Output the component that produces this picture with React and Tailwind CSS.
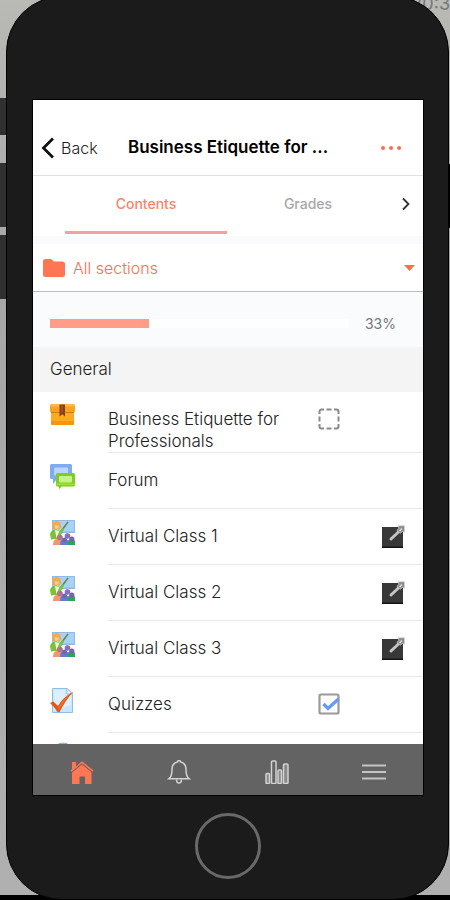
import React, { useState } from 'react';

const courseItems = [
  { id: 1, title: 'Business Etiquette for Professionals', icon: 'package', check: 'pending' },
  { id: 2, title: 'Forum', icon: 'forum' },
  { id: 3, title: 'Virtual Class 1', icon: 'class', link: '#class-1' },
  { id: 4, title: 'Virtual Class 2', icon: 'class', link: '#class-2' },
  { id: 5, title: 'Virtual Class 3', icon: 'class', link: '#class-3' },
  { id: 6, title: 'Quizzes', icon: 'quiz', check: 'done' },
  { id: 7, title: '', icon: 'globe' },
];

const PackageIcon = () => (
  <svg viewBox="0 0 25 25" className="size-[25px]" aria-hidden="true">
    <rect x="1" y="7" width="23" height="15" rx="1.5" fill="#fbab1c" />
    <path d="M1 18h23v2.5a1.5 1.5 0 0 1-1.5 1.5h-20A1.5 1.5 0 0 1 1 20.5z" fill="#f3970f" />
    <rect x="0" y="1" width="25" height="8.5" rx="1.5" fill="#f6a31e" />
    <path d="M1.5 1h22l1 2.5H.5z" fill="#fdb944" />
    <path d="M1 9h23v1H1z" fill="#d57a0c" />
    <path d="M9.5 1.5h5.500v12l-2.700-2.300-2.800 2.300z" fill="#8b3d12" />
    <path d="M11.500 2h1v8h-1z" fill="#b5652c" />
  </svg>
);

const ForumIcon = () => (
  <svg viewBox="0 0 25 25" className="size-[25px]" aria-hidden="true">
    <path d="M1.500 0h19A1.500 1.500 0 0 1 22 1.500v12a1.500 1.500 0 0 1-1.500 1.500H7l-4 5v-5H1.500A1.500 1.500 0 0 1 0 13.500v-12A1.500 1.500 0 0 1 1.500 0z" fill="#7fabf2" />
    <rect x="4" y="3.500" width="14" height="8" rx="1" fill="#bcd5fb" />
    <path d="M7.500 9h16a1.500 1.500 0 0 1 1.500 1.500v10.500a1.500 1.500 0 0 1-1.500 1.500H11.500L9.500 25l-1-2.500h-1A1.500 1.500 0 0 1 6 21V10.500A1.500 1.500 0 0 1 7.500 9z" fill="#7fce20" />
    <rect x="9" y="12" width="13" height="6.500" rx="1" fill="#c8f28a" />
    <path d="M6.500 19.500h18V21h-18z" fill="#9be833" />
  </svg>
);

const ClassIcon = () => (
  <svg viewBox="0 0 25 25" className="size-[25px]" aria-hidden="true">
    <rect x="2" y="0" width="23" height="13" fill="#8fb9ea" />
    <path d="M3 1h21v10.500H3z" fill="#a9d0f5" />
    <path d="M17.500 1.500l1.200.8-8 11-1.700-.8z" fill="#5a8a4a" />
    <path d="M0 14q1-4 5-4.500l5 1.500 2.500-3 1.700 1L11 15l-1 4H4l-3 .5z" fill="#7fc03a" />
    <path d="M5 10l1.500 8 3-7z" fill="#f3f7e6" />
    <circle cx="6.500" cy="5.500" r="4.500" fill="#ecae4c" />
    <path d="M4.500 5q2 1.300 4.500 0-.3 4-2.300 4T4.500 5z" fill="#f8cf8d" />
    <path d="M3 25q0-6.500 5-6.500t5 6.500z" fill="#f2937c" />
    <path d="M10 25q0-6 4.500-6t4.500 6z" fill="#5b7fd6" />
    <path d="M17 25q0-6 4.500-6 3.500 0 3.500 3v3z" fill="#2fa06a" />
    <circle cx="10" cy="17.500" r="2.800" fill="#b0709a" />
    <circle cx="14.500" cy="20" r="2.500" fill="#7863b3" />
    <circle cx="17.500" cy="16" r="2.800" fill="#8470c0" />
    <circle cx="21.800" cy="19" r="2.600" fill="#7a62a8" />
  </svg>
);

const QuizIcon = () => (
  <svg viewBox="0 0 25 25" className="size-[25px]" aria-hidden="true">
    <path d="M2.500.5H17l5.500 5.500v18.500h-20z" fill="#cbe5fb" stroke="#8fbfe8" />
    <path d="M4 2h11v5.500h6V17L4 23z" fill="#dceffd" />
    <path d="M17 .5V6h5.500z" fill="#fff" stroke="#8fbfe8" />
    <path d="M0 15l3.500-1.500L8 18Q13 9 23.500 3.500 16 11.500 9.500 24H7.500Q4 18.500 0 15z" fill="#e2581a" />
    <path d="M8 20q5-9 11-13Q13.500 14 9 22z" fill="#f0702c" />
  </svg>
);

const GlobeIcon = () => (
  <svg viewBox="0 0 25 25" className="size-[25px] overflow-visible" aria-hidden="true">
    <circle cx="13" cy="10" r="11" fill="#a5cdf2" stroke="#7db0e0" />
    <path d="M4 7q8-6 17 0l-5 8z" fill="#bfe0f8" />
  </svg>
);

const itemIcons = {
  package: PackageIcon,
  forum: ForumIcon,
  class: ClassIcon,
  quiz: QuizIcon,
  globe: GlobeIcon,
};

const OpenIcon = () => (
  <svg viewBox="0 0 24 24" className="size-6" aria-hidden="true">
    <rect x="1" y="2" width="21" height="21" fill="#383838" />
    <path d="M1 21.500h21V23H1z" fill="#151515" />
    <path d="M10 14l9-8.500" stroke="#c4c4c4" strokeWidth="3" strokeLinecap="round" />
    <path d="M17 .8h6.500v6.400l-2.300-.7-2.200 1.800-3-3 2-2.200z" fill="#8c8c8c" stroke="#d0d0d0" strokeWidth=".8" />
    <path d="M18.500 6l2.500-2.500" stroke="#ddd" strokeWidth="1.500" />
  </svg>
);

// 受講状況のチェックボックス
const StatusCheck = ({ item }) => {
  const [done, setDone] = useState(item.check === 'done');

  return (
    <label className="relative block size-[22px]">
      <input
        type="checkbox"
        checked={done}
        onChange={() => setDone(!done)}
        aria-label={item.title}
        className="block size-[22px] appearance-none"
      />
      <svg viewBox="0 0 22 22" className="pointer-events-none absolute inset-0 size-[22px]" aria-hidden="true">
        {done ? (
          <>
            <rect x="1.500" y="1.500" width="19" height="19" rx="1.500" fill="#fff" stroke="#999" strokeWidth="2.200" />
            <path d="M5.500 11l4.500 4.500L20.500 6" fill="none" stroke="#659bf3" strokeWidth="3.400" />
          </>
        ) : (
          <>
            <path
              d="M1.500 6V3.500a2 2 0 0 1 2-2H6M16 1.500h2.500a2 2 0 0 1 2 2V6M20.500 16v2.500a2 2 0 0 1-2 2H16M6 20.500H3.500a2 2 0 0 1-2-2V16"
              fill="none"
              stroke="#8a8a8a"
              strokeWidth="2"
            />
            <path d="M8.500 1.500h5M8.500 20.500h5M1.500 8.500v5M20.500 8.500v5" stroke="#8a8a8a" strokeWidth="2" />
          </>
        )}
      </svg>
    </label>
  );
};

const CourseRow = ({ item }) => {
  const Icon = itemIcons[item.icon];

  return (
    <li className="flex min-h-14 pl-[17px]">
      <div className="w-[58px] shrink-0 pt-[11px]">
        <Icon />
      </div>
      <div className="flex flex-1 items-start border-b border-[#e9e9e9] pt-4">
        <p className="flex-1 text-[17px] leading-[22px] font-light text-[#222]">{item.title}</p>
        <div className="flex w-8 shrink-0 justify-center">
          {item.check && <StatusCheck item={item} />}
        </div>
        <div className="flex w-[78px] shrink-0 justify-end pr-[18px]">
          {item.link && (
            <a href={item.link} aria-label={`Open ${item.title}`}>
              <OpenIcon />
            </a>
          )}
        </div>
      </div>
    </li>
  );
};

const BottomNav = () => (
  <nav className="grid h-[51px] shrink-0 grid-cols-4 bg-[#636363] pt-1">
    <a href="#home" aria-label="Home" className="flex items-center justify-center">
      <svg viewBox="0 0 24 24" className="size-6" fill="#ff7653" aria-hidden="true">
        <path d="M2 2h4v4.500L12 1.200l11.500 9.300-1 1.200L12 3.200 1.500 11.700.5 10.500 2 9.300z" />
        <path d="M12 4.400l9.500 7.800V24H15v-7.500H9.500V24H2V12.500z" />
      </svg>
    </a>
    <a href="#notifications" aria-label="Notifications" className="flex items-center justify-center">
      <svg viewBox="0 0 24 24" className="size-6" fill="none" stroke="#d2d2d2" strokeWidth="1.500" aria-hidden="true">
        <path d="M10.500 2a1.500 1.500 0 0 1 3 0C17.500 2.800 19 5.500 19 9.500c0 5 .8 7.500 3 9.200H2C4.200 17 5 14.500 5 9.500c0-4 1.500-6.700 5.500-7.500z" />
        <path d="M9.500 19.500a2.500 3.500 0 0 0 5 0" />
      </svg>
    </a>
    <a href="#stats" aria-label="Statistics" className="flex items-center justify-center">
      <svg viewBox="0 0 24 24" className="size-6" fill="#8a8a8a" stroke="#d2d2d2" strokeWidth="1.500" aria-hidden="true">
        <rect x="1" y="13.500" width="3.500" height="10" rx="1" />
        <rect x="6.500" y="1" width="4.500" height="22.500" rx="1" fill="none" />
        <rect x="13" y="10" width="3.500" height="13.500" rx="1" />
        <rect x="18.500" y="4" width="4.500" height="19.500" rx="1" />
      </svg>
    </a>
    <a href="#menu" aria-label="Menu" className="flex items-center justify-center">
      <svg viewBox="0 0 24 24" className="size-6" stroke="#c4c4c4" strokeWidth="1.800" aria-hidden="true">
        <path d="M0 5.500h24M0 12h24M0 18.500h24" />
      </svg>
    </a>
  </nav>
);

const CourseScreen = () => {
  const [tab, setTab] = useState('contents');
  const progress = 33;

  return (
    <main className="flex min-h-0 flex-1 flex-col overflow-hidden bg-white">
      {/* ヘッダー */}
      <header className="grid h-[76px] shrink-0 grid-cols-[1fr_auto_1fr] items-center border-b border-[#e2e2e2] px-2 pt-5">
        <a href="#back" className="flex items-center gap-1.5 text-[16px] font-light text-[#222]">
          <svg viewBox="0 0 14 22" className="h-[22px] w-3.5" fill="none" stroke="#111" strokeWidth="2.800" aria-hidden="true">
            <path d="M12 1.500L2.500 11l9.500 9.500" />
          </svg>
          Back
        </a>
        <h1 className="text-[17px] font-semibold text-black">Business Etiquette for ...</h1>
        <button type="button" aria-label="More options" className="justify-self-end pr-3.5">
          <svg viewBox="0 0 20 4" className="h-1 w-5" fill="#f9704e" aria-hidden="true">
            <circle cx="2" cy="2" r="2" />
            <circle cx="10" cy="2" r="2" />
            <circle cx="18" cy="2" r="2" />
          </svg>
        </button>
      </header>

      {/* タブ */}
      <div className="flex shrink-0 pb-0.5 pl-8 text-[14px] font-medium">
        <button
          type="button"
          onClick={() => setTab('contents')}
          className={`h-[58px] flex-1 border-b-[3px] ${tab === 'contents' ? 'border-[#f8a196] text-[#f9856a]' : 'border-transparent text-[#a8a8a8]'}`}
        >
          Contents
        </button>
        <button
          type="button"
          onClick={() => setTab('grades')}
          className={`h-[58px] flex-1 border-b-[3px] ${tab === 'grades' ? 'border-[#f8a196] text-[#f9856a]' : 'border-transparent text-[#a8a8a8]'}`}
        >
          Grades
        </button>
        <button type="button" aria-label="Next tab" className="flex h-[55px] w-[34px] items-center justify-center">
          <svg viewBox="0 0 8 14" className="h-3.5 w-2" fill="none" stroke="#333" strokeWidth="1.800" aria-hidden="true">
            <path d="M1 1.500L6.500 7 1 12.500" />
          </svg>
        </button>
      </div>
      <div className="h-2 shrink-0 bg-[#fafbfc]" />

      {/* セクション選択 */}
      <label className="flex h-12 shrink-0 items-center border-b border-[#bdbdbd] pr-2 pl-2.5">
        <svg viewBox="0 0 22 18" className="h-[18px] w-[22px]" fill="#ff7653" aria-hidden="true">
          <path d="M2.500 0H8l3 2.500h8.500A2.500 2.500 0 0 1 22 5v10.500a2.500 2.500 0 0 1-2.500 2.500h-17A2.500 2.500 0 0 1 0 15.500v-13A2.500 2.500 0 0 1 2.500 0z" />
        </svg>
        <select aria-label="Section" className="min-w-0 flex-1 appearance-none bg-transparent pl-2 text-[16px] font-light text-[#f9704e]">
          <option>All sections</option>
        </select>
        <svg viewBox="0 0 11 6" className="h-1.5 w-[11px]" fill="#f9704e" aria-hidden="true">
          <path d="M0 0h11L5.500 6z" />
        </svg>
      </label>

      {/* 進捗バー */}
      <div className="flex h-[55px] shrink-0 items-center gap-4 bg-[#f9fbfc] pt-2 pr-[27px] pl-[17px]">
        <div role="progressbar" aria-valuenow={progress} aria-label="Course progress" className="h-[9px] flex-1 bg-[#fdfefe]">
          <div className="h-full bg-[#ff9d88]" style={{ width: `${progress}%` }} />
        </div>
        <span className="text-[14px] text-[#777]">{progress}%</span>
      </div>

      {/* コンテンツ一覧 */}
      <h2 className="flex h-[45px] shrink-0 items-center bg-[#f4f4f4] pt-px pl-[17px] text-[17px] font-light text-[#222]">General</h2>
      <ul className="min-h-0 flex-1 overflow-hidden">
        {courseItems.map((item) => (
          <CourseRow key={item.id} item={item} />
        ))}
      </ul>

      <BottomNav />
    </main>
  );
};

const App = () => {
  return (
    <div className="relative flex h-screen overflow-hidden bg-[linear-gradient(to_bottom,#b9b9b5,#a6a6a6_30%,#b0b0b0_calc(100%-5px),#000_calc(100%-5px))] font-['Inter','Liberation_Sans',sans-serif]">
      <span className="absolute -top-2 right-0 text-[18px] leading-6 text-[#777]">20:3</span>

      {/* 本体左側のボタン */}
      <div className="flex w-1.5 shrink-0 flex-col pt-[98px]">
        <div className="h-[37px] bg-[#303030]" />
        <div className="mt-7 h-16 bg-[#303030]" />
        <div className="mt-2 h-16 bg-[#303030]" />
      </div>

      <div className="relative -mt-1 flex min-w-0 flex-1 flex-col rounded-[56px] border border-black bg-[#1b1b1b] pt-[102px] pr-6 pl-[25px]">
        <div className="flex min-h-0 flex-1 flex-col border border-black">
          <CourseScreen />
        </div>
        <div className="flex h-[103px] shrink-0 items-center justify-center pb-1">
          <button type="button" aria-label="Home button" className="size-[66px] rounded-full border-[3px] border-[#696969]" />
        </div>
      </div>

      <div className="flex w-px shrink-0 flex-col pt-[164px]">
        <div className="h-16 bg-black" />
      </div>
    </div>
  );
};

export default App;
